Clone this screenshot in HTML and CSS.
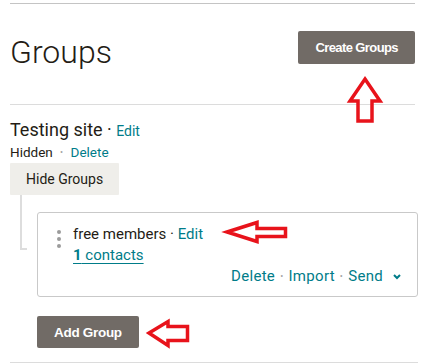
FILE: index.html
```html
<!DOCTYPE html>
<html lang="en">
<head>
  <meta charset="UTF-8" />
  <meta name="viewport" content="width=device-width, initial-scale=1.0"/>
  <title>Groups</title>
  <link rel="stylesheet" href="styles.css">
</head>
<body>
  <div class="page">
    <div class="rule"></div>

    <!-- Judul dan tombol buat grup -->
    <div class="header">
      <h1>Groups</h1>
      <button class="btn">Create Groups</button>
    </div>

    <div class="rule light"></div>

    <div class="group">
      <div class="group-title">Testing site <span class="sep">&middot;</span> <a class="link small">Edit</a></div>
      <div class="group-meta">Hidden <span class="dot">&bull;</span> <a class="link">Delete</a></div>
      <button class="btn-secondary">Hide Groups</button>

      <div class="tree">
        <div class="connector"></div>
        <div class="column">
          <div class="card">
            <div class="handle"><i></i><i></i><i></i></div>
            <div class="card-body">
              <div class="card-name">free members <span class="sep">&middot;</span> <a class="link">Edit</a></div>
              <div><a class="link contacts"><b>1</b> contacts</a></div>
              <div class="actions">
                <a class="link">Delete</a><span class="dot">&bull;</span><a class="link">Import</a><span class="dot">&bull;</span><a class="link">Send</a>
                <svg class="chevron" width="8" height="6" viewBox="0 0 8 6"><polyline points="1,1 4,4 7,1" fill="none" stroke="#007c89" stroke-width="2"/></svg>
              </div>
            </div>
          </div>
          <button class="btn add-btn">Add Group</button>
        </div>
      </div>
    </div>

    <div class="rule light bottom"></div>
  </div>

  <!-- Panah merah penanda -->
  <svg class="annotations" width="422" height="364" viewBox="0 0 422 364">
    <polygon points="365,79 380,101 372,101 372,121 358,121 358,101 350,101" />
    <polygon points="227,232 257,222.5 257,228.5 285.5,228.5 285.5,236.5 257,236.5 257,241.5" />
    <polygon points="149,333 168,321.5 168,326.5 187.5,326.5 187.5,340.5 168,340.5 168,345.5" />
  </svg>
</body>
</html>
```

FILE: styles.css
```css
body {
  margin: 0;
  font-family: Roboto, sans-serif;
  color: #241c15;
  background-color: #fff;
}
.page {
  width: 408px;
  padding-left: 10px;
}
.rule {
  height: 1px;
  background-color: #c4c4c4;
  margin-top: 3px;
  margin-right: 3px;
}
.rule.light {
  background-color: #dcdcdc;
  margin-top: 0;
}
.rule.bottom {
  margin-top: 14px;
  margin-right: 0;
}
.header {
  display: flex;
  justify-content: space-between;
  align-items: flex-start;
  height: 100px;
  padding-top: 27px;
  box-sizing: border-box;
  margin-right: 3px;
}
h1 {
  margin: 3px 0 0;
  font-size: 32px;
  line-height: 36px;
  font-weight: 300;
}
.btn {
  background-color: #716b66;
  color: #fff;
  border: none;
  border-radius: 2px;
  height: 33px;
  padding: 0 17px;
  font-family: "Liberation Sans", Arial, sans-serif;
  font-weight: bold;
  font-size: 13px;
  letter-spacing: -0.6px;
}
.link {
  color: #007c89;
}
.sep {
  color: #241c15;
}
.dot {
  color: #a3a3a3;
  font-size: 9px;
  margin: 0 4px;
  vertical-align: 2px;
}
.group {
  padding-top: 15px;
}
.group-title {
  font-size: 18px;
  line-height: 20px;
}
.group-title .small {
  font-size: 14px;
}
.group-meta {
  font-size: 13.5px;
  line-height: 22px;
}
.btn-secondary {
  display: block;
  background-color: #efeeea;
  color: #241c15;
  border: none;
  border-radius: 1px;
  height: 32px;
  padding: 0 16px;
  font-family: Roboto, sans-serif;
  font-size: 14px;
}
.tree {
  display: flex;
  align-items: flex-start;
  margin-left: 10px;
}
.connector {
  width: 7px;
  height: 55px;
  box-sizing: border-box;
  border-left: 2px solid #dddddd;
  border-bottom: 2px solid #dddddd;
}
.column {
  flex: 1;
  margin-left: 10px;
  padding-top: 17px;
}
.card {
  display: flex;
  gap: 12px;
  border: 1px solid #c9c9c9;
  border-radius: 3px;
  padding: 11px 16px 9px 19px;
  font-size: 15px;
  line-height: 21px;
}
.handle {
  display: flex;
  flex-direction: column;
  gap: 3px;
  margin-top: 6px;
}
.handle i {
  width: 4px;
  height: 4px;
  border-radius: 50%;
  background-color: #9b9b9b;
}
.card-body {
  flex: 1;
}
.contacts {
  text-decoration: underline;
  text-underline-offset: 3px;
  text-decoration-thickness: 1px;
}
.contacts b {
  font-weight: 700;
}
.actions {
  display: flex;
  justify-content: flex-end;
  align-items: center;
  letter-spacing: 0.3px;
}
.actions .dot {
  margin: 0 5px;
  vertical-align: 0;
}
.chevron {
  margin-left: 10px;
}
.add-btn {
  margin-top: 19px;
  height: 32px;
  font-size: 13.5px;
  letter-spacing: -0.3px;
}
.annotations {
  position: absolute;
  top: 0;
  left: 0;
  pointer-events: none;
}
.annotations polygon {
  fill: none;
  stroke: #e8131b;
  stroke-width: 3.5;
}
```
